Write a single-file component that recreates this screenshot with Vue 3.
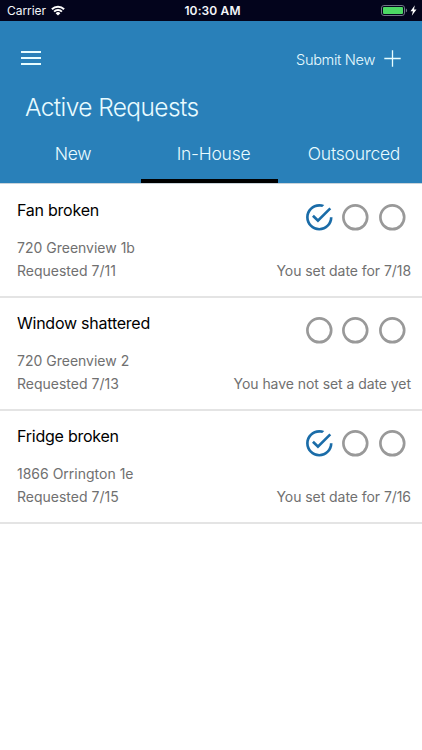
<template>
  <div class="screen">
    <div class="status-bar">
      <div class="carrier">
        <span>Carrier</span>
        <svg class="wifi" viewBox="0 0 14 11">
          <path d="M0.9 4.3a8.7 8.7 0 0 1 12.2 0" />
          <path d="M3.1 6.6a5.6 5.6 0 0 1 7.8 0" />
          <path class="dot" d="M7 10.6L4.6 8.2a3.5 3.5 0 0 1 4.8 0z" />
        </svg>
      </div>
      <span class="clock">10:30 AM</span>
      <div class="power">
        <svg class="battery" viewBox="0 0 27 11">
          <rect class="shell" x="0.5" y="0.5" width="23" height="10" rx="2.4" />
          <rect class="level" x="2" y="2" width="20" height="7" rx="1" />
          <path class="cap" d="M24.8 3.6v3.8c0.9-0.3 1.3-0.9 1.3-1.9s-0.4-1.6-1.3-1.9z" />
        </svg>
        <svg class="bolt" viewBox="0 0 7 11">
          <path d="M4.8 0.3L0.5 6.2h2.4L1.8 10.8l4.7-6.2H4z" />
        </svg>
      </div>
    </div>

    <header>
      <div class="toolbar">
        <div class="menu"><i></i><i></i><i></i></div>
        <div class="submit">
          <span>Submit New</span>
          <svg viewBox="0 0 17 17"><path d="M8.5 0.3v16.4M0.3 8.5h16.4" /></svg>
        </div>
      </div>
      <h1>Active Requests</h1>
      <nav>
        <div
          v-for="tab in tabs"
          :key="tab"
          class="tab"
          :class="{ active: tab === current }"
          @click="current = tab"
        >
          {{ tab }}
        </div>
      </nav>
    </header>

    <ul>
      <li v-for="item in requests" :key="item.title">
        <div class="top">
          <h2>{{ item.title }}</h2>
          <div class="steps">
            <svg v-for="n in 3" :key="n" viewBox="0 0 512 512">
              <path v-if="n <= item.step" class="done" :d="checkPath" />
              <circle v-else cx="256" cy="256" r="187" />
            </svg>
          </div>
        </div>
        <p>{{ item.address }}</p>
        <div class="bottom">
          <p>Requested {{ item.requested }}</p>
          <p class="note">{{ item.note }}</p>
        </div>
      </li>
    </ul>
  </div>
</template>

<script setup>
import { ref } from 'vue'

const tabs = ['New', 'In-House', 'Outsourced']
const current = ref('In-House')

const requests = [
  {
    title: 'Fan broken',
    address: '720 Greenview 1b',
    requested: '7/11',
    note: 'You set date for 7/18',
    step: 1,
  },
  {
    title: 'Window shattered',
    address: '720 Greenview 2',
    requested: '7/13',
    note: 'You have not set a date yet',
    step: 0,
  },
  {
    title: 'Fridge broken',
    address: '1866 Orrington 1e',
    requested: '7/15',
    note: 'You set date for 7/16',
    step: 1,
  },
]

// open circle with a check mark
const checkPath =
  'M170.7 216.5L141.6 245.6l93.6 93.6 208-208-29.1-29.1L235.2 279.9zM422.4 256c0 91.5-74.9 166.4-166.4 166.4S89.6 347.5 89.6 256 164.5 89.6 256 89.6c15.6 0 31.2 2.1 45.8 6.2L334 62.6C310.2 53.3 283.4 48 256 48 141.6 48 48 141.6 48 256s93.6 208 208 208 208-93.6 208-208z'
</script>

<style>
body {
  background: #fff;
}
</style>

<style scoped>
.screen {
  width: 422px;
  height: 750px;
  overflow: hidden;
  background: #fff;
  font-family: Inter, 'Liberation Sans', sans-serif;
}

h1,
h2,
p,
ul {
  margin: 0;
  padding: 0;
  font-weight: 400;
}

svg {
  display: block;
}

.status-bar {
  display: grid;
  grid-template-columns: 1fr auto 1fr;
  align-items: center;
  box-sizing: border-box;
  height: 21px;
  padding: 0 5px 0 7px;
  background: #03041c;
  color: #f4f6fa;
  font-size: 12px;
}

.carrier {
  display: flex;
  align-items: center;
  gap: 5px;
  letter-spacing: -0.05px;
}

.wifi {
  width: 14px;
  height: 11px;
  fill: none;
  stroke: #fff;
  stroke-width: 2;
}

.wifi .dot {
  fill: #fff;
  stroke: none;
}

.clock {
  padding-left: 1px;
  font-weight: 600;
  letter-spacing: 0.12px;
}

.power {
  display: flex;
  align-items: center;
  justify-content: flex-end;
  gap: 2px;
}

.battery {
  width: 27px;
  height: 11px;
}

.shell {
  fill: none;
  stroke: #6f7485;
}

.level {
  fill: #4cd964;
}

.cap {
  fill: #6f7485;
}

.bolt {
  width: 7px;
  height: 11px;
  fill: #fff;
}

header {
  height: 162px;
  background: #2980b9;
  color: #e8fbff;
  font-weight: 300;
}

.toolbar {
  display: flex;
  justify-content: space-between;
  height: 66px;
  padding: 0 21px;
}

.menu {
  display: flex;
  flex-direction: column;
  gap: 4px;
  width: 20px;
  padding-top: 30px;
}

.menu i {
  height: 2px;
  background: #e8fdff;
}

.submit {
  display: flex;
  gap: 9px;
  padding-top: 29px;
  font-size: 14.6px;
  line-height: 21px;
  letter-spacing: -0.34px;
}

.submit svg {
  width: 17px;
  height: 17px;
  fill: none;
  stroke: #e8fdff;
  stroke-width: 1.3;
}

h1 {
  height: 40px;
  padding-left: 25px;
  font-size: 24.5px;
  font-weight: 300;
  line-height: 40px;
  letter-spacing: -0.6px;
}

nav {
  display: grid;
  grid-template-columns: 141px 137px 1fr;
  height: 56px;
}

.tab {
  box-sizing: border-box;
  border-bottom: 4px solid transparent;
  padding: 14px 0 0 8px;
  font-size: 17.5px;
  line-height: 25px;
  letter-spacing: -0.25px;
  text-align: center;
}

.tab:first-child {
  padding-left: 5px;
}

.tab.active {
  border-color: #000;
}

ul {
  border-top: 1px solid #c9d3da;
  list-style: none;
}

li {
  box-sizing: border-box;
  height: 113px;
  padding: 16px 11px 0 17px;
  border-bottom: 2px solid #e4e4e4;
}

li:first-child {
  height: 114px;
  padding-top: 17px;
}

.top {
  display: flex;
  justify-content: space-between;
  height: 35px;
}

h2 {
  color: #000;
  font-size: 16px;
  line-height: 19px;
  letter-spacing: -0.24px;
}

.steps {
  display: flex;
  gap: 4px;
  margin-right: 2.6px;
}

.steps svg {
  width: 32.6px;
  height: 32.6px;
}

.steps circle {
  fill: none;
  stroke: #999;
  stroke-width: 42;
}

.steps .done {
  fill: #1a6ca8;
}

p {
  color: #707070;
  font-size: 14px;
  line-height: 23px;
}

.bottom {
  display: flex;
  justify-content: space-between;
}

.note {
  letter-spacing: -0.06px;
}
</style>
